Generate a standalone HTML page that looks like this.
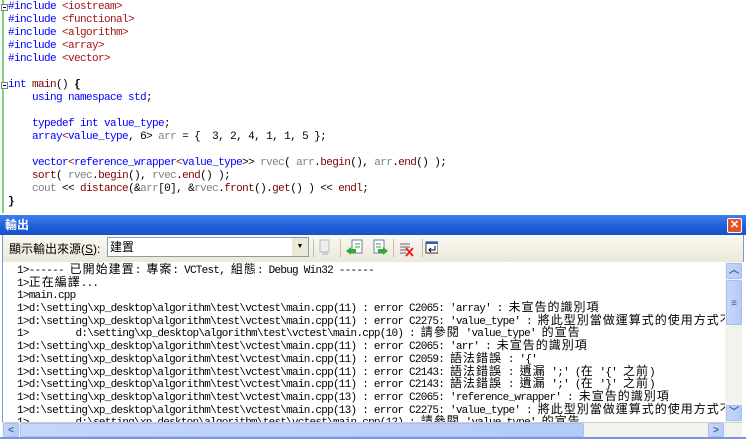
<!DOCTYPE html>
<html><head><meta charset="utf-8"><style>
*{margin:0;padding:0;box-sizing:border-box}
body{width:746px;height:439px;overflow:hidden;background:#fff;position:relative;font-family:"Liberation Mono","Noto Sans CJK TC",monospace}
#ed{position:absolute;left:0;top:0;width:746px;height:213px;background:#fff}
#gl{position:absolute;left:2px;top:0;width:2px;height:213px;background:#7fd37f}
.code{position:absolute;left:8px;top:1px;font-size:11px;letter-spacing:-0.6px;line-height:13px;white-space:pre;color:#000}
.b{color:#0000ff}.r{color:#a31515}.g{color:#808080}.m{color:#800000}
.fold{position:absolute;left:1px;width:7px;height:7px;border:1px solid #808080;background:#fff}
.fold:after{content:"";position:absolute;left:1px;top:2px;width:3px;height:1px;background:#000}
#title{position:absolute;left:0;top:215px;width:746px;height:20px;background:linear-gradient(#3d7ff0,#1d5ed9 60%,#1952c8);color:#fff;font-size:12px;font-weight:bold;line-height:20px;padding-left:5px;font-family:"Liberation Sans","Noto Sans CJK TC",sans-serif}
#x{position:absolute;right:4px;top:218px;width:15px;height:15px;background:#e2542c;border:1px solid #fff;border-radius:2px;color:#fff;font:bold 11px/12px "Liberation Sans",sans-serif;text-align:center}
#tb{position:absolute;left:2px;top:235px;width:742px;height:27px;background:linear-gradient(#f9f8f3,#ece9d8);border-left:1px solid #7a96df;border-right:1px solid #7a96df}
#lbl{position:absolute;left:9px;top:240px;font-size:12px;font-family:"Liberation Sans","Noto Sans CJK TC",sans-serif}
#combo{position:absolute;left:107px;top:237px;width:202px;height:20px;background:#fff;border:1px solid #7f9db9;font:12px/18px "Liberation Sans","Noto Sans CJK TC",sans-serif;padding-left:2px}
#dd{position:absolute;right:0;top:0;width:16px;height:18px;background:#ece9d8;font-size:7px;text-align:center;line-height:18px}
.sep{position:absolute;top:239px;width:1px;height:18px;background:#c5c2b2}
#out{position:absolute;left:2px;top:262px;width:723px;height:160px;background:#fff;border-left:1px solid #7a96df;overflow:hidden}
.o{position:absolute;left:14px;top:3px;font-size:11px;letter-spacing:-0.75px}
.o div{height:12.7px;line-height:12.7px;white-space:pre}
.o i{font-style:normal;font-size:12px;letter-spacing:1px;font-family:"Noto Sans CJK TC",sans-serif;line-height:0}
#vs{position:absolute;left:725px;top:262px;width:17px;height:160px;background:#f3f3ee}
#hs{position:absolute;left:2px;top:422px;width:740px;height:15px;background:#f3f3ee;border-top:1px solid #d0d0c8}
.btn{position:absolute;background:linear-gradient(90deg,#c5d6fc,#b4cbf8);border:1px solid #a6bff0;border-radius:2px;color:#4d6185;font:bold 10px/13px "Liberation Sans",sans-serif;text-align:center}
#bot{position:absolute;left:0;top:437px;width:746px;height:2px;background:#7a96df}
</style></head><body>
<div id="ed"><div id="gl"></div>
<div class="fold" style="top:4px"></div><div class="fold" style="top:82px"></div>
<div class="code"><span class="b">#include</span> <span class="r">&lt;iostream&gt;</span>
<span class="b">#include</span> <span class="r">&lt;functional&gt;</span>
<span class="b">#include</span> <span class="r">&lt;algorithm&gt;</span>
<span class="b">#include</span> <span class="r">&lt;array&gt;</span>
<span class="b">#include</span> <span class="r">&lt;vector&gt;</span>

<span class="b">int</span> <span class="m">main</span>() <b>{</b>
    <span class="b">using namespace std</span>;

    <span class="b">typedef int value_type</span>;
    <span class="b">array</span><span class="r">&lt;</span><span class="b">value_type</span>, 6&gt; <span class="g">arr</span> = {  3, 2, 4, 1, 1, 5 };

    <span class="b">vector</span><span class="r">&lt;</span><span class="b">reference_wrapper</span><span class="r">&lt;</span><span class="b">value_type</span>&gt;&gt; <span class="g">rvec</span>( <span class="g">arr</span>.<span class="m">begin</span>(), <span class="g">arr</span>.<span class="m">end</span>() );
    <span class="m">sort</span>( <span class="g">rvec</span>.<span class="m">begin</span>(), <span class="g">rvec</span>.<span class="m">end</span>() );
    <span class="g">cout</span> &lt;&lt; <span class="m">distance</span>(&amp;<span class="g">arr</span>[0], &amp;<span class="g">rvec</span>.<span class="m">front</span>().<span class="m">get</span>() ) &lt;&lt; <span class="m">endl</span>;
<b>}</b></div></div>
<div id="title">輸出</div><div id="x">✕</div>
<div id="tb"></div>
<div id="lbl">顯示輸出來源(<u>S</u>):</div>
<div id="combo">建置<div id="dd">▼</div></div>
<div class="sep" style="left:313px"></div><div class="sep" style="left:340px"></div><div class="sep" style="left:393px"></div><div class="sep" style="left:422px"></div>
<svg style="position:absolute;left:318px;top:239px" width="120" height="20">
<rect x="2" y="1" width="9" height="12" fill="#eee" stroke="#bbb"/><path d="M4 12h6v4H4z" fill="#ccc"/>
<rect x="34" y="1" width="10" height="13" fill="#fff" stroke="#6a7fa8"/><path d="M37 5h5M37 8h5" stroke="#3a3"/><path d="M28 12l5-4v2h5v4h-5v2z" fill="#3a3"/>
<rect x="56" y="1" width="10" height="13" fill="#fff" stroke="#6a7fa8"/><path d="M58 5h5M58 8h5" stroke="#3a3"/><path d="M70 12l-5-4v2h-5v4h5v2z" fill="#3a3"/>
<path d="M82 5h10M82 8h10M82 11h8M82 14h6" stroke="#667"/><path d="M88 9l7 8M95 9l-7 8" stroke="#e22" stroke-width="2"/>
<rect x="108" y="3" width="12" height="11" fill="#fff" stroke="#334"/><rect x="108" y="3" width="12" height="2" fill="#2a5ad0"/><path d="M117 7v4h-5M113 9l-2 2 2 2" stroke="#000" fill="none"/>
</svg>
<div id="out"><div class="o">
<div>1&gt;------ <i>已開始建置</i>: <i>專案</i>: VCTest, <i>組態</i>: Debug Win32 ------</div>
<div>1&gt;<i>正在編譯</i>...</div>
<div>1&gt;main.cpp</div>
<div>1&gt;d:\setting\xp_desktop\algorithm\test\vctest\main.cpp(11) : error C2065: 'array' : <i>未宣告的識別項</i></div>
<div>1&gt;d:\setting\xp_desktop\algorithm\test\vctest\main.cpp(11) : error C2275: 'value_type' : <i>將此型別當做運算式的使用方式不合法</i></div>
<div>1&gt;        d:\setting\xp_desktop\algorithm\test\vctest\main.cpp(10) : <i>請參閱</i> 'value_type' <i>的宣告</i></div>
<div>1&gt;d:\setting\xp_desktop\algorithm\test\vctest\main.cpp(11) : error C2065: 'arr' : <i>未宣告的識別項</i></div>
<div>1&gt;d:\setting\xp_desktop\algorithm\test\vctest\main.cpp(11) : error C2059: <i>語法錯誤</i> : '{'</div>
<div>1&gt;d:\setting\xp_desktop\algorithm\test\vctest\main.cpp(11) : error C2143: <i>語法錯誤</i> : <i>遺漏</i> ';' (<i>在</i> '{' <i>之前</i>)</div>
<div>1&gt;d:\setting\xp_desktop\algorithm\test\vctest\main.cpp(11) : error C2143: <i>語法錯誤</i> : <i>遺漏</i> ';' (<i>在</i> '}' <i>之前</i>)</div>
<div>1&gt;d:\setting\xp_desktop\algorithm\test\vctest\main.cpp(13) : error C2065: 'reference_wrapper' : <i>未宣告的識別項</i></div>
<div>1&gt;d:\setting\xp_desktop\algorithm\test\vctest\main.cpp(13) : error C2275: 'value_type' : <i>將此型別當做運算式的使用方式不合法</i></div>
<div>1&gt;        d:\setting\xp_desktop\algorithm\test\vctest\main.cpp(12) : <i>請參閱</i> 'value_type' <i>的宣告</i></div>
</div></div>
<div id="vs"></div>
<div class="btn" style="left:726px;top:263px;width:16px;height:16px">︿</div>
<div class="btn" style="left:726px;top:280px;width:16px;height:45px;line-height:45px">≡</div>
<div class="btn" style="left:726px;top:405px;width:16px;height:16px">﹀</div>
<div id="hs"></div>
<div class="btn" style="left:3px;top:423px;width:16px;height:14px">&lt;</div>
<div class="btn" style="left:20px;top:423px;width:564px;height:14px"></div>
<div class="btn" style="left:708px;top:423px;width:16px;height:14px">&gt;</div>
<div id="bot"></div>
</body></html>
